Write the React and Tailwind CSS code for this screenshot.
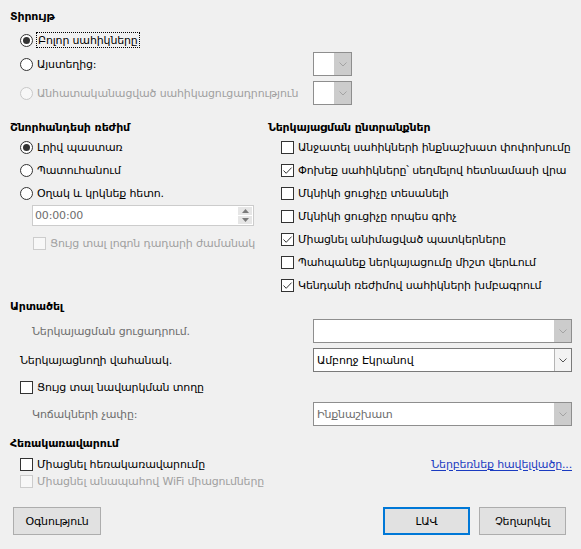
import React from "react";

/* ---------- CONTROLS ---------- */
const Radio = ({ checked, disabled }) => (
  <span
    className={`w-[13px] h-[13px] rounded-full border flex items-center justify-center shrink-0 ${
      disabled ? "border-[#c8c8c8] bg-[#f7f7f7]" : "border-[#333333] bg-white"
    }`}
  >
    {checked && <span className="w-[7px] h-[7px] rounded-full bg-[#333333]" />}
  </span>
);

const Check = ({ checked, disabled }) => (
  <span
    className={`w-[13px] h-[13px] border flex items-center justify-center shrink-0 ${
      disabled ? "border-[#cccccc] bg-[#f7f7f7]" : "border-[#333333] bg-white"
    }`}
  >
    {checked && (
      <svg width="11" height="11" viewBox="0 0 11 11">
        <path d="M1.5 5.5 L4.2 8.3 L9.6 2.6" fill="none" stroke="#333333" strokeWidth="1" />
      </svg>
    )}
  </span>
);

const Chevron = ({ color }) => (
  <svg width="8" height="5" viewBox="0 0 8 5">
    <path d="M0.5 0.5 L4 4 L7.5 0.5" fill="none" stroke={color} strokeWidth="1" />
  </svg>
);

const Combo = ({ width, value, disabled }) => (
  <div
    className={`h-[24px] flex border bg-white shrink-0 ${disabled ? "border-[#8e8e8e]" : "border-[#7a7a7a]"}`}
    style={{ width }}
  >
    <div className={`flex-1 flex items-center pl-[3px] ${disabled ? "text-[#6d6d6d]" : "text-black"}`}>
      {value}
    </div>
    {disabled ? (
      <div className="w-[17px] bg-[#cccccc] flex items-center justify-center">
        <Chevron color="#a3a3a3" />
      </div>
    ) : (
      <div className="w-[17px] bg-[#f3f3f3] border-l border-[#b5b5b5] flex items-center justify-center">
        <Chevron color="#555555" />
      </div>
    )}
  </div>
);

const Button = ({ label, primary, width }) => (
  <button
    className={`h-[28px] bg-[#e1e1e1] flex items-center justify-center ${
      primary ? "border-2 border-[#0078d7]" : "border border-[#adadad]"
    }`}
    style={{ width }}
  >
    {label}
  </button>
);

/* ---------- MAIN ---------- */
export default function App() {
  const options = [
    ["Անջատել սահիկների ինքնաշխատ փոփոխումը", false],
    ["Փոխեք սահիկները՝ սեղմելով հետնամասի վրա", true],
    ["Մկնիկի ցուցիչը տեսանելի", false],
    ["Մկնիկի ցուցիչը որպես գրիչ", false],
    ["Միացնել անիմացված պատկերները", true],
    ["Պահպանեք ներկայացումը միշտ վերևում", false],
    ["Կենդանի ռեժիմով սահիկների խմբագրում", true],
  ];

  return (
    <div className="w-[581px] h-[549px] bg-[#f0f0f0] text-black text-[11px] tracking-[-0.15px] leading-none whitespace-nowrap font-['DejaVu_Sans','Noto_Sans',sans-serif] flex flex-col overflow-hidden">
      {/* RANGE */}
      <div className="pl-[10px] pt-[6px]">
        <div className="h-[20px] flex items-center font-bold">Տիրույթ</div>
        <div className="mt-[2px] h-[24px] flex items-center pl-[10px]">
          <Radio checked />
          <span className="ml-[3px] border border-dotted border-black px-[1px] h-[16px] flex items-center">
            Բոլոր սահիկները
          </span>
        </div>
        <div className="h-[24px] flex items-center pl-[10px]">
          <div className="w-[293px] flex items-center">
            <Radio />
            <span className="ml-[4px]">Այստեղից:</span>
          </div>
          <Combo width={39} disabled />
        </div>
        <div className="mt-[5px] h-[24px] flex items-center pl-[10px]">
          <div className="w-[293px] flex items-center text-[#a0a0a0]">
            <Radio disabled />
            <span className="ml-[4px]">Անհատականացված սահիկացուցադրություն</span>
          </div>
          <Combo width={39} disabled />
        </div>
      </div>

      {/* MODE + OPTIONS */}
      <div className="mt-[13px] flex">
        <div className="w-[268px] pl-[10px]">
          <div className="h-[18px] flex items-center font-bold">Շնորհանդեսի ռեժիմ</div>
          {[
            ["Լրիվ պաստառ", true],
            ["Պատուհանում", false],
            ["Օղակ և կրկնեք հետո.", false],
          ].map(([label, on]) => (
            <div key={label} className="h-[23px] flex items-center pl-[10px]">
              <Radio checked={on} />
              <span className="ml-[4px]">{label}</span>
            </div>
          ))}
          <div className="ml-[22px] w-[222px] h-[21px] border border-[#cccccc] bg-white flex">
            <div className="flex-1 flex items-center pl-[2px] text-[#6d6d6d]">00:00:00</div>
            <div className="w-[16px] flex flex-col gap-[1px] p-[1px]">
              <div className="flex-1 bg-[#e6e6e6] flex items-center justify-center">
                <svg width="7" height="4" viewBox="0 0 7 4">
                  <path d="M0 4 L3.5 0 L7 4 Z" fill="#7a7a7a" />
                </svg>
              </div>
              <div className="flex-1 bg-[#e6e6e6] flex items-center justify-center">
                <svg width="7" height="4" viewBox="0 0 7 4">
                  <path d="M0 0 L3.5 4 L7 0 Z" fill="#7a7a7a" />
                </svg>
              </div>
            </div>
          </div>
          <div className="mt-[6px] h-[22px] flex items-center pl-[23px] text-[#a0a0a0]">
            <Check disabled />
            <span className="ml-[4px]">Ցույց տալ լոգոն դադարի ժամանակ</span>
          </div>
        </div>

        <div className="flex-1">
          <div className="h-[18px] flex items-center font-bold">Ներկայացման ընտրանքներ</div>
          {options.map(([label, on]) => (
            <div key={label} className="h-[23px] flex items-center pl-[13px]">
              <Check checked={on} />
              <span className="ml-[4px]">{label}</span>
            </div>
          ))}
        </div>
      </div>

      {/* OUTPUT */}
      <div className="pl-[10px]">
        <div className="h-[18px] flex items-center font-bold">Արտածել</div>
        <div className="mt-[4px] h-[24px] flex items-center">
          <div className="w-[303px] pl-[22px] text-[#6d6d6d]">Ներկայացման ցուցադրում.</div>
          <Combo width={259} value="" disabled />
        </div>
        <div className="mt-[5px] h-[24px] flex items-center">
          <div className="w-[303px] pl-[10px]">Ներկայացնողի վահանակ.</div>
          <Combo width={259} value="Ամբողջ Էկրանով" />
        </div>
        <div className="mt-[3px] h-[24px] flex items-center pl-[10px]">
          <Check />
          <span className="ml-[4px]">Ցույց տալ նավարկման տողը</span>
        </div>
        <div className="mt-[3px] h-[24px] flex items-center">
          <div className="w-[303px] pl-[22px] text-[#6d6d6d]">Կոճակների չափը:</div>
          <Combo width={259} value="Ինքնաշխատ" disabled />
        </div>
      </div>

      {/* REMOTE */}
      <div className="pl-[10px] pr-[9px]">
        <div className="mt-[8px] h-[18px] flex items-center font-bold">Հեռակառավարում</div>
        <div className="mt-[3px] h-[18px] flex items-center pl-[10px]">
          <Check />
          <span className="ml-[4px]">Միացնել հեռակառավարումը</span>
          <a className="ml-auto text-[#1a3bc1] underline underline-offset-2">Ներբեռնեք հավելվածը...</a>
        </div>
        <div className="h-[17px] flex items-center pl-[10px] text-[#a0a0a0]">
          <Check disabled />
          <span className="ml-[4px]">Միացնել անապահով WiFi միացումները</span>
        </div>
      </div>

      {/* BUTTONS */}
      <div className="mt-[17px] flex pl-[13px] pr-[15px] gap-[9px]">
        <Button label="Օգնություն" width={88} />
        <div className="ml-auto" />
        <Button label="ԼԱՎ" width={87} primary />
        <Button label="Չեղարկել" width={87} />
      </div>
    </div>
  );
}
